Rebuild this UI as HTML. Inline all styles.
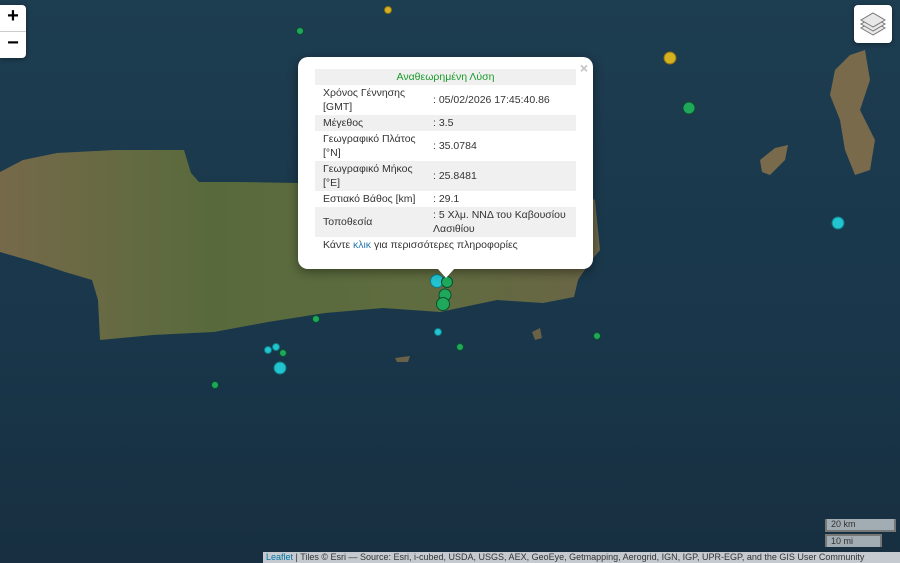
<!DOCTYPE html>
<html><head><meta charset="utf-8"><style>
html,body{margin:0;padding:0;width:900px;height:563px;overflow:hidden;font-family:"Liberation Sans",sans-serif}
#map{position:relative;width:900px;height:563px;background:#1b3a4d}
svg{position:absolute;left:0;top:0}
.zoom{position:absolute;left:0;top:5px;width:26px;background:#fff;border-radius:0 4px 4px 0;box-shadow:0 1px 4px rgba(0,0,0,.4)}
.zoom div{height:26px;line-height:26px;text-align:center;font:bold 20px "Liberation Sans",sans-serif;color:#000}
.zoom div:first-child{border-bottom:1px solid #ccc}
.layers{position:absolute;left:854px;top:5px;width:38px;height:38px;background:#fff;border-radius:4px;box-shadow:0 1px 4px rgba(0,0,0,.4)}
.popup{position:absolute;left:298px;top:57px;width:295px;height:212px;background:#fff;border-radius:10px;box-shadow:0 3px 10px rgba(0,0,0,.4)}
.tip{position:absolute;left:437px;top:268px;width:0;height:0;border-left:9px solid transparent;border-right:9px solid transparent;border-top:10px solid #fff}
.close{position:absolute;right:5px;top:3px;color:#c3c3c3;font:bold 14px "Liberation Sans",sans-serif}
table{position:absolute;left:17px;top:12px;width:261px;border-collapse:collapse;font-size:10.5px;color:#333;table-layout:fixed}
td{padding:1px 0 1px 8px;line-height:14px;vertical-align:middle}
tr.g{background:#f0f0f0}
.scale{position:absolute;font-size:9px;color:#333;background:rgba(255,255,255,.6);border:2px solid #777;border-top:none;padding:0 4px;line-height:11px}
.attr{position:absolute;left:263px;top:552px;width:637px;height:11px;background:rgba(255,255,255,.75);font-size:9px;line-height:11px;color:#333;padding-left:3px;white-space:nowrap;overflow:hidden}
</style></head><body><div id="map">
<svg width="900" height="563">
<defs><linearGradient id="l" x1="0" y1="0" x2="1" y2="0"><stop offset="0" stop-color="#76694a"/><stop offset=".35" stop-color="#586a3c"/><stop offset=".7" stop-color="#5f6c3f"/><stop offset="1" stop-color="#6a6545"/></linearGradient>
<linearGradient id="s" x1="0" y1="0" x2="0" y2="1"><stop offset="0" stop-color="#1d3d50"/><stop offset=".6" stop-color="#19364a"/><stop offset="1" stop-color="#172f40"/></linearGradient></defs>
<rect width="900" height="563" fill="url(#s)"/>
<polygon fill="url(#l)" points="0,172 23,160 57,153 115,150 184,150 191,173 199,182 237,182 298,183 330,180 400,175 500,170 560,180 595,200 600,250 590,262 578,280 574,297 543,303 497,300 440,312 383,308 325,313 268,322 214,332 153,335 100,340 98,300 92,280 65,272 38,263 0,252"/>
<polygon fill="#7a6a4c" points="835,70 850,55 865,50 870,80 860,110 875,140 870,170 855,175 845,150 840,120 830,95"/>
<polygon fill="#7a6a4c" points="760,160 775,148 788,145 785,160 770,175 762,172"/>
<polygon fill="#6b6048" points="395,358 410,356 408,362 397,362"/>
<polygon fill="#6b6048" points="532,332 540,328 542,338 535,340"/>
<g stroke="#0a4f30" stroke-width="1">
<circle cx="388" cy="10" r="3.5" fill="#d4b023" stroke="#8a7010"/>
<circle cx="300" cy="31" r="3.5" fill="#1fa85a"/>
<circle cx="670" cy="58" r="6" fill="#d4b023" stroke="#8a7010"/>
<circle cx="689" cy="108" r="6" fill="#1fa85a"/>
<circle cx="838" cy="223" r="6" fill="#22c4d0" stroke="#0e7c85"/>
<circle cx="437" cy="281" r="6.5" fill="#22c4d0" stroke="#0e7c85"/>
<circle cx="447" cy="282" r="5.5" fill="#1fa85a"/>
<circle cx="445" cy="295" r="6" fill="#1fa85a"/>
<circle cx="443" cy="304" r="6.5" fill="#1fa85a"/>
<circle cx="316" cy="319" r="3.5" fill="#1fa85a"/>
<circle cx="438" cy="332" r="3.5" fill="#22c4d0" stroke="#0e7c85"/>
<circle cx="460" cy="347" r="3.5" fill="#1fa85a"/>
<circle cx="597" cy="336" r="3.5" fill="#1fa85a"/>
<circle cx="268" cy="350" r="3.5" fill="#22c4d0" stroke="#0e7c85"/>
<circle cx="276" cy="347" r="3.5" fill="#22c4d0" stroke="#0e7c85"/>
<circle cx="283" cy="353" r="3.5" fill="#1fa85a"/>
<circle cx="280" cy="368" r="6" fill="#22c4d0" stroke="#0e7c85"/>
<circle cx="215" cy="385" r="3.5" fill="#1fa85a"/>
</g>
</svg>
<div class="zoom"><div>+</div><div>−</div></div>
<div class="layers"><svg width="38" height="38"><g fill="#e8e8e8" stroke="#777" stroke-width="1"><polygon points="19,30 7,23 19,16 31,23"/><polygon points="19,26 7,19 19,12 31,19"/><polygon points="19,22 7,15 19,8 31,15"/></g></svg></div>
<div class="popup"><div class="close">×</div>
<table>
<colgroup><col style="width:110px"><col></colgroup>
<tr class="g"><td colspan="2" style="text-align:center;color:#1a9a2a;padding:1px 0">Αναθεωρημένη Λύση</td></tr>
<tr><td>Χρόνος Γέννησης [GMT]</td><td>: 05/02/2026 17:45:40.86</td></tr>
<tr class="g"><td>Μέγεθος</td><td>: 3.5</td></tr>
<tr><td>Γεωγραφικό Πλάτος [°N]</td><td>: 35.0784</td></tr>
<tr class="g"><td>Γεωγραφικό Μήκος [°E]</td><td>: 25.8481</td></tr>
<tr><td>Εστιακό Βάθος [km]</td><td>: 29.1</td></tr>
<tr class="g"><td>Τοποθεσία</td><td>: 5 Χλμ. ΝΝΔ του Καβουσίου Λασιθίου</td></tr>
<tr><td colspan="2">Κάντε <span style="color:#2a7ab0">κλικ</span> για περισσότερες πληροφορίες</td></tr>
</table></div>
<div class="tip"></div>
<div class="scale" style="left:825px;top:519px;width:59px">20 km</div>
<div class="scale" style="left:825px;top:534px;width:45px;border-top:2px solid #777;border-bottom:none">10 mi</div>
<div class="attr"><span style="color:#0078a8">Leaflet</span> | Tiles © Esri — Source: Esri, i-cubed, USDA, USGS, AEX, GeoEye, Getmapping, Aerogrid, IGN, IGP, UPR-EGP, and the GIS User Community</div>
</div></body></html>
